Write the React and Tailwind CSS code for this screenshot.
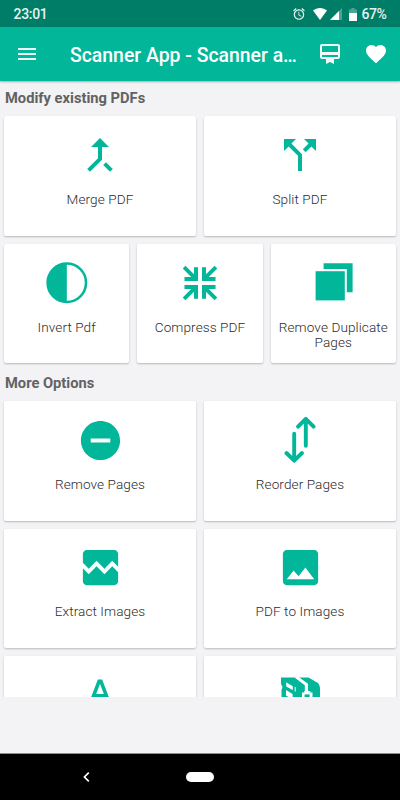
import React from 'react';
import {
    MdAccessAlarm,
    MdBrokenImage,
    MdCallMerge,
    MdCallSplit,
    MdCardMembership,
    MdFavorite,
    MdImage,
    MdMenu,
    MdRemoveCircle,
} from 'react-icons/md';

const InvertIcon = () => (
    <svg viewBox="0 0 48 48" className="size-12">
        <circle cx="23.8" cy="23.7" r="19.2" fill="none" stroke="currentColor" strokeWidth="2.5" />
        <path d="M23.8 4.7a19 19 0 0 0 0 38z" fill="currentColor" />
    </svg>
);

// One arrow pointing at the centre, mirrored into the four corners
const CompressIcon = () => {
    const arrow = 'M-2-2V-15.7h-4v6.9L-14.6-17.2L-17.2-14.6L-8.8-6H-15.5v4z';
    return (
        <svg viewBox="-24 -24 48 48" className="size-12" fill="currentColor">
            <path d={arrow} />
            <path d={arrow} transform="scale(-1 1)" />
            <path d={arrow} transform="scale(1 -1)" />
            <path d={arrow} transform="scale(-1 -1)" />
        </svg>
    );
};

const DuplicateIcon = () => (
    <svg viewBox="0 0 48 48" className="size-12" fill="currentColor">
        <path d="M14.6 4.2h29v29h-5.8v-23.2H14.6z" />
        <path d="M6.6 12.2h29.2v29.2H6.6z" />
    </svg>
);

const ReorderIcon = () => (
    <svg viewBox="0 0 48 48" className="size-12" fill="none" stroke="currentColor" strokeWidth="3.9" strokeLinecap="round" strokeLinejoin="round">
        <path d="M29.8 29.8V3.2M22 10.7l7.8-7.8l7.8 7.8" />
        <path d="M18.2 17.8v26.4M10.4 37l7.8 7.6l7.8-7.6" />
    </svg>
);

const LetterIcon = () => (
    <svg viewBox="0 0 48 48" className="size-12" fill="none" stroke="currentColor" strokeWidth="3.6">
        <path d="M15.4 30.5L23.1 10.2h1.8L32.6 30.5M18 24.8h12" />
    </svg>
);

const ZipIcon = () => (
    <svg viewBox="0 0 48 48" className="size-12">
        <path d="M5 6.4h14l12 7v28H9L5.5 37V19l1-3-1.5-3z" fill="currentColor" />
        <path d="M23 6.4h9.5L42 12c1.4 1.5 2 3.5 2 6v20l-8 4h-4V15.5z" fill="currentColor" />
        <path d="M18.5 6.4h4.8l8.7 6.4v7.7h-3.2v-6.2z" fill="#fff" />
        <path d="M10.2 11.3l6.6 4v3.6l-6.6-3.4zM10 19l6.6 4v5.5L10 24.5z" fill="#fff" />
        <path d="M19.2 16v4.5" stroke="#fff" strokeWidth="1" />
        <path d="M26 21.5h2.3V20h6v1.5h2.2v8H26z" fill="#fff" />
        <path d="M28.6 23.4h5v5h-5z" fill="currentColor" />
    </svg>
);

const modifyRow = [
    { label: 'Merge PDF', icon: <MdCallMerge size={48} /> },
    { label: 'Split PDF', icon: <MdCallSplit size={48} /> },
];

const toolsRow = [
    { label: 'Invert Pdf', icon: <InvertIcon /> },
    { label: 'Compress PDF', icon: <CompressIcon /> },
    { label: 'Remove Duplicate Pages', icon: <DuplicateIcon /> },
];

const moreOptions = [
    { label: 'Remove Pages', icon: <MdRemoveCircle size={47} /> },
    { label: 'Reorder Pages', icon: <ReorderIcon /> },
    { label: 'Extract Images', icon: <MdBrokenImage size={47} /> },
    { label: 'PDF to Images', icon: <MdImage size={47} /> },
    { icon: <LetterIcon /> },
    { icon: <ZipIcon /> },
];

const Card = ({ icon, label }) => (
    <button className="flex h-[119.5px] flex-col items-center rounded-xs bg-white pt-[15px] shadow-[0_1px_2px_rgba(0,0,0,0.24)]">
        <span className="flex size-12 items-center justify-center text-[#02b699]">{icon}</span>
        {label && (
            <span className="mt-[12.8px] text-center text-[13.6px] leading-[15.7px] font-light tracking-[0.08px] text-[#2c2c2c]">
                {label}
            </span>
        )}
    </button>
);

const SectionTitle = ({ children }) => (
    <h2 className="px-[5px] text-[14.7px] leading-[17px] font-bold text-[#626264]">{children}</h2>
);

const StatusBar = () => (
    <div className="flex h-[27px] items-center bg-[#007d66] pt-px pr-[13.5px] pl-[13.5px] text-[14px] font-medium text-[#e4f2ef]">
        <span className="tracking-[-0.3px]">23:01</span>
        <div className="ml-auto flex items-center">
            <MdAccessAlarm size={14} />
            <svg viewBox="0 0 14 12" className="ml-[7px] h-3 w-[14px]" fill="#fff">
                <path d="M0 2.6C4-.8 10-.8 14 2.6L7 12z" />
            </svg>
            <svg viewBox="0 0 12 12" className="ml-[3px] size-3" fill="#fff">
                <path d="M12 0v12H0z" opacity="0.3" />
                <path d="M9 3v9H0z" />
            </svg>
            <svg viewBox="0 0 8 13" className="ml-[7px] h-[13px] w-2" fill="#fff">
                <path d="M2.3 0h3.4v1.4H8V5H0V1.4h2.3z" opacity="0.3" />
                <path d="M0 5h8v8H0z" />
            </svg>
            <span className="ml-1 tracking-[-0.4px]">67%</span>
        </div>
    </div>
);

const AppBar = () => (
    <header className="relative flex h-[54px] items-center bg-[#02b699] pr-[12px] pl-[15px] text-white shadow-[0_1px_2px_rgba(0,0,0,0.3)]">
        <MdMenu size={24} className="shrink-0 text-[#e9f8f5]" />
        <h1 className="ml-[31px] pt-[3px] text-[19.4px] font-medium whitespace-nowrap">Scanner App - Scanner a…</h1>
        <MdCardMembership size={24} className="ml-auto shrink-0 text-[#f0faf8]" />
        <MdFavorite size={24} className="ml-[22px] shrink-0" />
    </header>
);

const NavBar = () => (
    <nav className="flex h-[46px] items-center bg-black pl-[82px]">
        <svg viewBox="0 0 8 12" className="h-3 w-2" fill="none" stroke="#fff" strokeWidth="1.7">
            <path d="M6.8 1.6L2.4 6l4.4 4.4" />
        </svg>
        <span className="ml-24 h-[10px] w-7 rounded-full bg-white" />
    </nav>
);

export default function App() {
    return (
        <div className="flex h-[800px] w-[400px] flex-col overflow-hidden bg-[#f3f3f6] font-['Roboto','Liberation_Sans',sans-serif]">
            <StatusBar />
            <AppBar />
            <main className="h-[616px] overflow-hidden pt-[9px]">
                <SectionTitle>Modify existing PDFs</SectionTitle>
                <div className="mt-[9.3px] grid grid-cols-2 gap-2 px-1">
                    {modifyRow.map((item) => (
                        <Card key={item.label} {...item} />
                    ))}
                </div>
                <div className="mt-2 mb-[11.4px] grid grid-cols-3 gap-2 px-1">
                    {toolsRow.map((item) => (
                        <Card key={item.label} {...item} />
                    ))}
                </div>
                <SectionTitle>More Options</SectionTitle>
                <div className="mt-[9.4px] grid grid-cols-2 gap-2 px-1">
                    {moreOptions.map((item, index) => (
                        <Card key={index} {...item} />
                    ))}
                </div>
            </main>
            <div className="mt-auto border-t border-[#8d8f8f]">
                <NavBar />
            </div>
        </div>
    );
}
